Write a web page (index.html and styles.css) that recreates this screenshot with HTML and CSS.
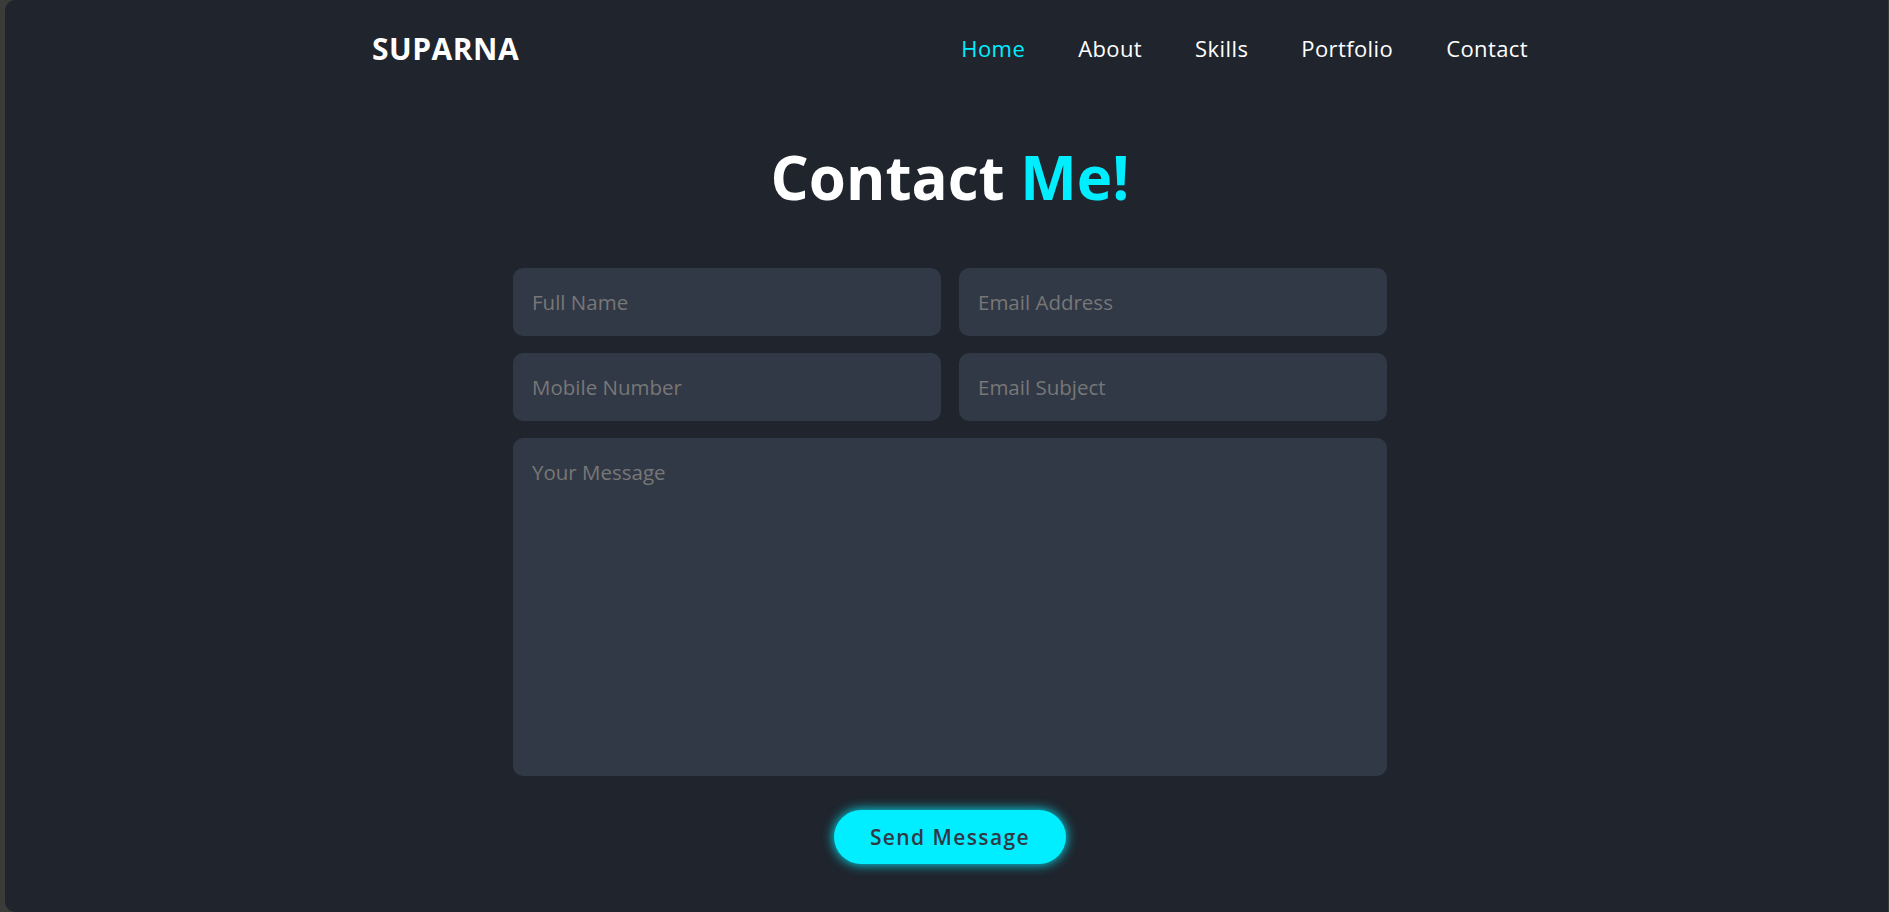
FILE: index.html
```html
<!DOCTYPE html>
<html lang="en">
<head>
<meta charset="UTF-8">
<title>Suparna - Contact</title>
<link rel="stylesheet" href="styles.css">
</head>
<body>
<div class="window">
  <header class="header">
    <a class="logo" href="#">SUPARNA</a>
    <nav class="navbar">
      <a class="active" href="#">Home</a>
      <a href="#">About</a>
      <a href="#">Skills</a>
      <a href="#">Portfolio</a>
      <a href="#">Contact</a>
    </nav>
  </header>
  <section class="contact">
    <h2 class="heading">Contact <span>Me!</span></h2>
    <form class="contact-form">
      <div class="input-box">
        <input type="text" placeholder="Full Name">
        <input type="email" placeholder="Email Address">
      </div>
      <div class="input-box">
        <input type="number" placeholder="Mobile Number">
        <input type="text" placeholder="Email Subject">
      </div>
      <textarea placeholder="Your Message"></textarea>
      <div class="actions">
        <button type="button" class="btn">Send Message</button>
      </div>
    </form>
  </section>
</div>
</body>
</html>
```
FILE: styles.css
```css
* {
  box-sizing: border-box;
}

html, body {
  margin: 0;
  padding: 0;
  height: 100%;
}

body {
  background: #3b3b3a;
  font-family: "Open Sans", "Noto Sans", sans-serif;
  overflow: hidden;
}

.window {
  height: 912px;
  margin: 0 1px 0 5px;
  padding-left: 7px;
  background: #1f242d;
  border-radius: 10px 0 0 10px;
}

.header {
  width: 1156px;
  height: 96px;
  margin: 0 auto;
  display: flex;
  align-items: center;
  justify-content: space-between;
}

.logo {
  color: #fff;
  text-decoration: none;
  font-size: 30px;
  font-weight: 700;
  letter-spacing: 0.5px;
}

.navbar {
  display: flex;
  gap: 53px;
}

.navbar a {
  color: #fff;
  text-decoration: none;
  font-size: 22px;
  letter-spacing: 0.4px;
}

.navbar a.active {
  color: #00eeff;
}

.contact {
  padding-top: 43px;
}

.heading {
  margin: 0;
  text-align: center;
  color: #fff;
  font-size: 60px;
  font-weight: 700;
  line-height: 77px;
}

.heading span {
  color: #00eeff;
}

.contact-form {
  width: 874px;
  margin: 52px auto 0;
}

.input-box {
  display: flex;
  justify-content: space-between;
  margin-bottom: 17px;
}

.input-box input,
.contact-form textarea {
  display: block;
  background: #323946;
  border: none;
  outline: none;
  border-radius: 10px;
  color: #fff;
  font-family: inherit;
  font-size: 20.5px;
  padding: 0 19px;
}

.input-box input {
  width: 428px;
  height: 68px;
}

.contact-form textarea {
  width: 100%;
  height: 338px;
  padding: 19px;
  resize: none;
  line-height: 30px;
}

.input-box input::placeholder,
.contact-form textarea::placeholder {
  color: #777777;
}

.actions {
  display: flex;
  justify-content: center;
  margin-top: 34px;
}

.btn {
  width: 232px;
  height: 54px;
  border: none;
  border-radius: 27px;
  background: #00eeff;
  box-shadow: 0 0 12px #00eeff;
  color: #323946;
  font-family: inherit;
  font-size: 21px;
  font-weight: 600;
  letter-spacing: 1.4px;
  cursor: pointer;
}
```
